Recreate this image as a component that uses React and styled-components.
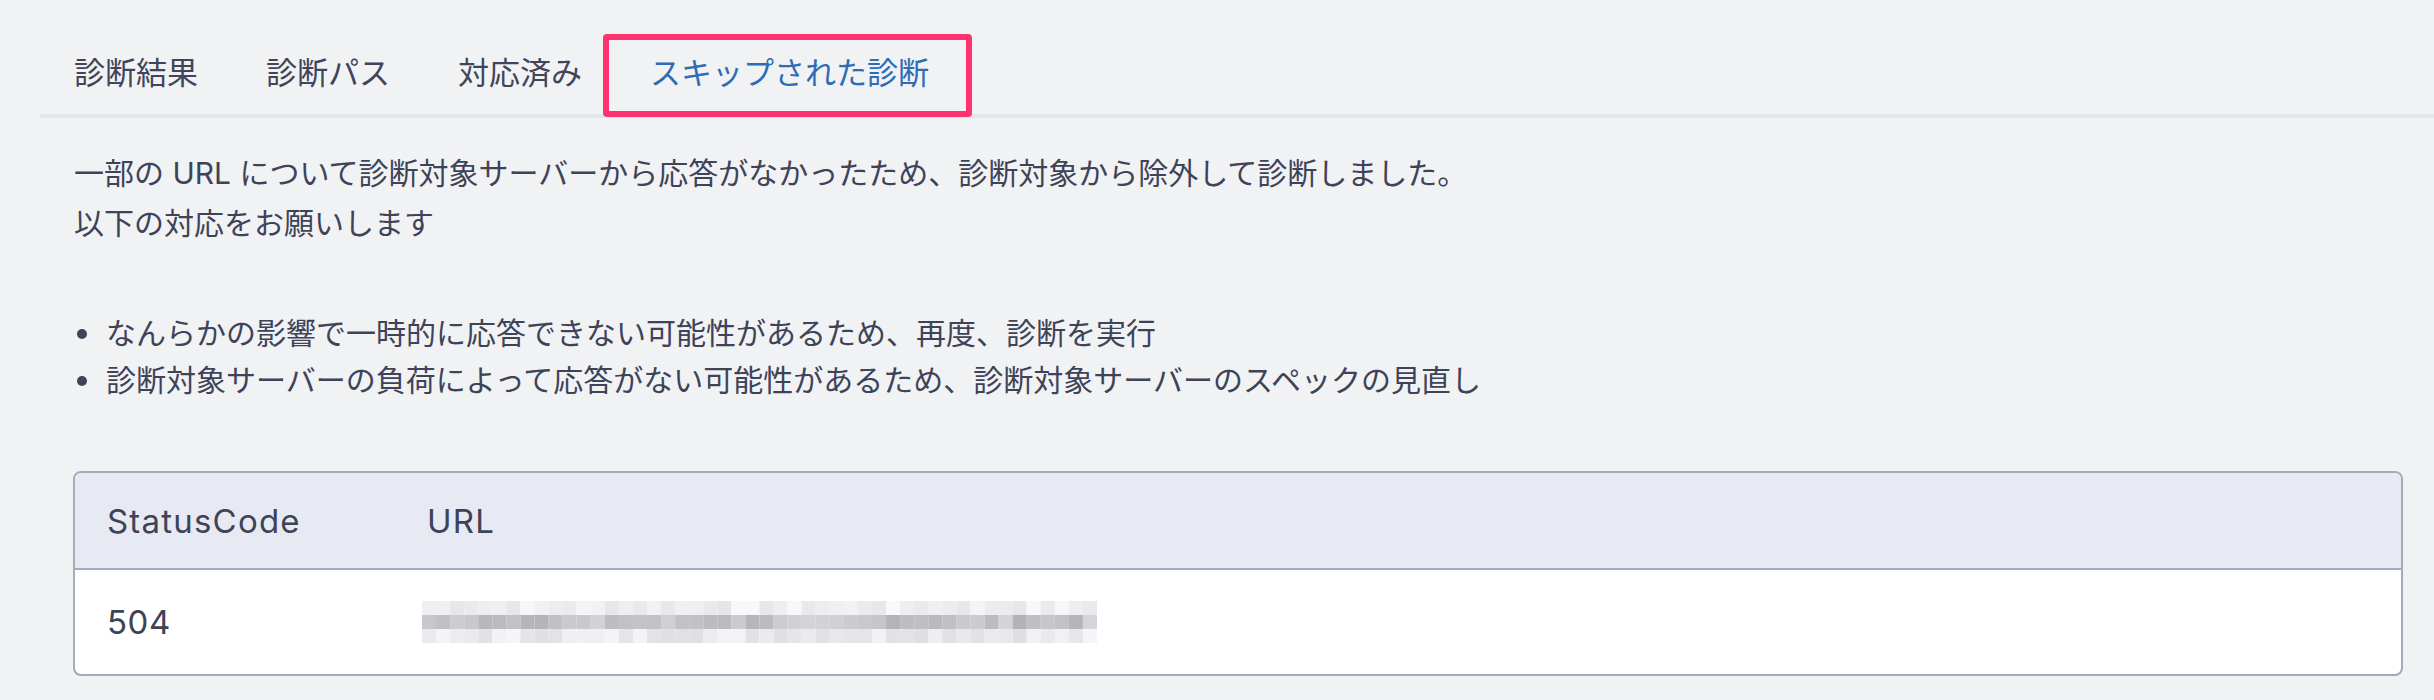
import React from "react";
import styled, { createGlobalStyle } from "styled-components";

const GlobalStyle = createGlobalStyle`
  body {
    margin: 0;
    background: #f1f2f4;
    font-family: "Inter", "Noto Sans CJK JP", sans-serif;
    color: #3e4358;
  }
`;

const tabs = ["診断結果", "診断パス", "対応済み", "スキップされた診断"];
const advice = [
  "なんらかの影響で一時的に応答できない可能性があるため、再度、診断を実行",
  "診断対象サーバーの負荷によって応答がない可能性があるため、診断対象サーバーのスペックの見直し",
];
const skipped = [{ status: 504 }];

// pixelated stand-in for the hidden url
function BlurredUrl() {
  let seed = 7;
  const rand = () => {
    seed = (seed * 9301 + 49297) % 233280;
    return seed / 233280;
  };
  const cols = 48;
  const rows = [
    [228, 248],
    [178, 212],
    [222, 246],
  ];
  const rects = [];
  rows.forEach(([lo, hi], r) => {
    for (let c = 0; c < cols; c++) {
      const v = Math.round(lo + rand() * (hi - lo));
      rects.push(
        <rect
          key={`${r}-${c}`}
          x={c * 14}
          y={r * 14}
          width="14"
          height="14"
          fill={`rgb(${v},${v},${Math.min(255, v + 5)})`}
        />
      );
    }
  });
  return (
    <svg width="675" height="42" viewBox="0 0 672 42" preserveAspectRatio="none">
      {rects}
    </svg>
  );
}

export default function App() {
  return (
    <>
      <GlobalStyle />
      <Page>
        <TabBar>
          {tabs.map((t, i) => (
            <Tab key={t} active={i === tabs.length - 1}>
              {t}
            </Tab>
          ))}
        </TabBar>
        <Content>
          <Intro>
            一部の URL について診断対象サーバーから応答がなかったため、診断対象から除外して診断しました。
            <br />
            以下の対応をお願いします
          </Intro>
          <Advice>
            {advice.map((a) => (
              <AdviceItem key={a}>
                <Dot />
                {a}
              </AdviceItem>
            ))}
          </Advice>
          <Table>
            <HeadRow>
              <Cell>StatusCode</Cell>
              <Cell>URL</Cell>
            </HeadRow>
            {skipped.map((row) => (
              <BodyRow key={row.status}>
                <Cell>{row.status}</Cell>
                <UrlCell>
                  <BlurredUrl />
                </UrlCell>
              </BodyRow>
            ))}
          </Table>
        </Content>
      </Page>
    </>
  );
}

const Page = styled.div`
  padding-left: 40px;
  padding-bottom: 24px;
`;

const TabBar = styled.div`
  display: flex;
  padding-top: 32px;
  border-bottom: 4px solid #e1e7ee;
`;

const Tab = styled.div`
  position: relative;
  padding: 18px 34px;
  font-size: 31px;
  line-height: 46px;
  color: ${(p) => (p.active ? "#2f6cb3" : "#40455a")};
  &::after {
    content: "";
    display: ${(p) => (p.active ? "block" : "none")};
    position: absolute;
    top: 2px;
    left: -13px;
    right: -9px;
    bottom: -3px;
    border: 6px solid #fe3370;
    border-radius: 4px;
  }
`;

const Content = styled.div`
  padding: 30px 31px 0 33px;
`;

const Intro = styled.p`
  margin: 0 0 0 1px;
  font-size: 30px;
  line-height: 50px;
`;

const Advice = styled.ul`
  list-style: none;
  margin: 62px 0 0 1px;
  padding: 0;
`;

const AdviceItem = styled.li`
  display: flex;
  align-items: center;
  gap: 19px;
  font-size: 30px;
  line-height: 47px;
`;

const Dot = styled.span`
  width: 10px;
  height: 10px;
  margin-left: 3px;
  border-radius: 50%;
  background: #3e4358;
  flex-shrink: 0;
`;

const Table = styled.div`
  margin-top: 67px;
  border: 2px solid #a5aabb;
  border-radius: 8px;
  overflow: hidden;
  background: #ffffff;
`;

const HeadRow = styled.div`
  display: grid;
  grid-template-columns: 320px 1fr;
  align-items: center;
  height: 95px;
  background: #e7eaf2;
  border-bottom: 2px solid #a5aabb;
  letter-spacing: 1.2px;
`;

const BodyRow = styled.div`
  display: grid;
  grid-template-columns: 320px 1fr;
  align-items: center;
  height: 104px;
  letter-spacing: 0.5px;
`;

const Cell = styled.div`
  padding-left: 32px;
  font-size: 33px;
  color: #3e4358;
`;

const UrlCell = styled.div`
  display: flex;
  padding-left: 27px;
`;
